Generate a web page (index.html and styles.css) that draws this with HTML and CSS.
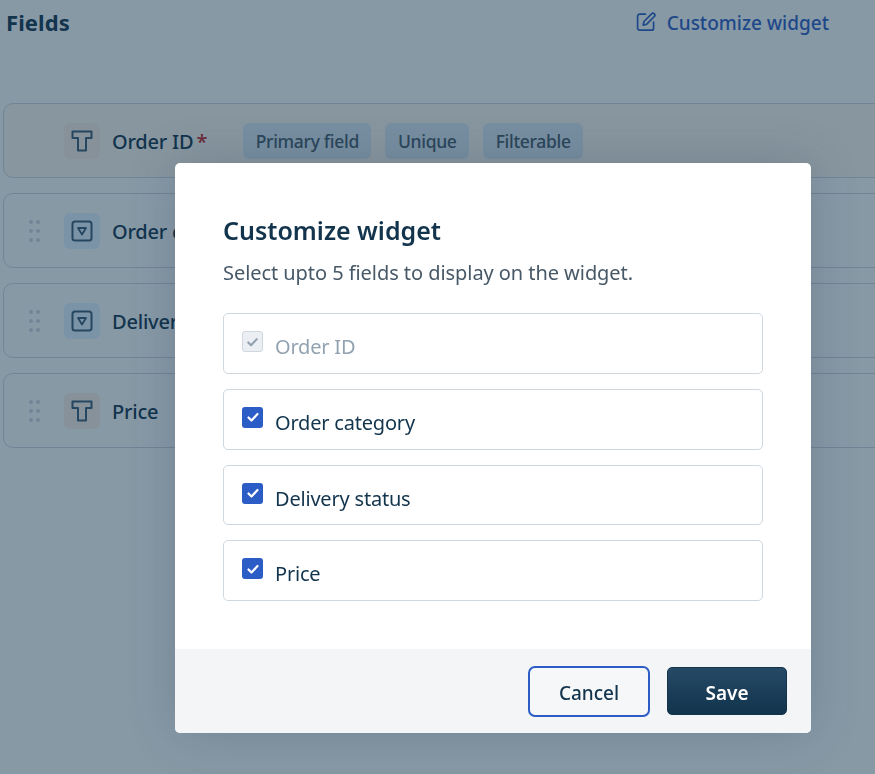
FILE: index.html
```html
<!DOCTYPE html>
<html lang="en">
<head>
<meta charset="utf-8">
<title>Fields</title>
<link rel="stylesheet" href="styles.css">
</head>
<body>
<main class="page">
  <header class="page-head">
    <h1 class="page-title">Fields</h1>
    <a class="customize-link">
      <svg class="edit-icon" viewBox="0 0 20 20" width="20" height="20" fill="none" stroke="currentColor" stroke-width="1.7" stroke-linecap="round" stroke-linejoin="round"><path d="M9.5 2.2H3.6A2 2 0 0 0 1.6 4.2v12a2 2 0 0 0 2 2h12a2 2 0 0 0 2-2v-6"/><path d="M15.6 1.8a1.9 1.9 0 0 1 2.7 2.7l-7.6 7.7-3.6.9.9-3.6z"/></svg>
      <span>Customize widget</span>
    </a>
  </header>
  <section class="field-list">
    <div class="field field-primary">
      <span class="drag drag-empty"></span>
      <span class="type-icon type-text"><svg viewBox="0 0 22 22" width="22" height="22" fill="none" stroke="currentColor" stroke-width="2"><path d="M1.500 1.500h19v6.500h-5.500v12.500h-8V8H1.500z" stroke-linejoin="round"/></svg></span>
      <span class="field-name">Order ID<span class="req">*</span></span>
      <span class="tags"><span class="tag">Primary field</span><span class="tag">Unique</span><span class="tag">Filterable</span></span>
    </div>
    <div class="field">
      <span class="drag"><i></i><i></i><i></i><i></i><i></i><i></i></span>
      <span class="type-icon type-select"><svg viewBox="0 0 22 22" width="22" height="22" fill="none" stroke="currentColor" stroke-width="2"><rect x="1.500" y="1.500" width="19" height="19" rx="2.500"/><path d="M7 8h8l-4 6.500z" stroke-width="1.800" stroke-linejoin="round"/></svg></span>
      <span class="field-name">Order category</span>
    </div>
    <div class="field">
      <span class="drag"><i></i><i></i><i></i><i></i><i></i><i></i></span>
      <span class="type-icon type-select"><svg viewBox="0 0 22 22" width="22" height="22" fill="none" stroke="currentColor" stroke-width="2"><rect x="1.500" y="1.500" width="19" height="19" rx="2.500"/><path d="M7 8h8l-4 6.500z" stroke-width="1.800" stroke-linejoin="round"/></svg></span>
      <span class="field-name">Delivery status</span>
    </div>
    <div class="field">
      <span class="drag"><i></i><i></i><i></i><i></i><i></i><i></i></span>
      <span class="type-icon type-text"><svg viewBox="0 0 22 22" width="22" height="22" fill="none" stroke="currentColor" stroke-width="2"><path d="M1.500 1.500h19v6.500h-5.500v12.500h-8V8H1.500z" stroke-linejoin="round"/></svg></span>
      <span class="field-name">Price</span>
    </div>
  </section>
</main>
<div class="overlay">
  <div class="modal">
    <div class="modal-body">
      <h2 class="modal-title">Customize widget</h2>
      <p class="modal-sub">Select upto 5 fields to display on the widget.</p>
      <div class="options">
        <label class="option option-disabled"><span class="box"><svg viewBox="0 0 20 20" width="20" height="20" fill="none" stroke="currentColor" stroke-width="2.200" stroke-linecap="round" stroke-linejoin="round"><path d="M5.500 10.500l3 3 6-6.500"/></svg></span><span class="option-label">Order ID</span></label>
        <label class="option"><span class="box"><svg viewBox="0 0 20 20" width="20" height="20" fill="none" stroke="currentColor" stroke-width="2.200" stroke-linecap="round" stroke-linejoin="round"><path d="M5.500 10.500l3 3 6-6.500"/></svg></span><span class="option-label">Order category</span></label>
        <label class="option"><span class="box"><svg viewBox="0 0 20 20" width="20" height="20" fill="none" stroke="currentColor" stroke-width="2.200" stroke-linecap="round" stroke-linejoin="round"><path d="M5.500 10.500l3 3 6-6.500"/></svg></span><span class="option-label">Delivery status</span></label>
        <label class="option"><span class="box"><svg viewBox="0 0 20 20" width="20" height="20" fill="none" stroke="currentColor" stroke-width="2.200" stroke-linecap="round" stroke-linejoin="round"><path d="M5.500 10.500l3 3 6-6.500"/></svg></span><span class="option-label">Price</span></label>
      </div>
    </div>
    <footer class="modal-foot">
      <button class="btn btn-cancel">Cancel</button>
      <button class="btn btn-save">Save</button>
    </footer>
  </div>
</div>
</body>
</html>
```

FILE: styles.css
```css
* { box-sizing: border-box; }
html, body { margin: 0; height: 100%; overflow: hidden; }
body {
  background: #fff;
  color: #12344d;
  font-family: "Noto Sans", "Open Sans", sans-serif;
  width: 875px;
  height: 774px;
}
.page { padding: 0 0 0 3px; width: 960px; }
.page-head {
  display: flex;
  align-items: center;
  height: 103px;
  padding: 0 0 57px 3px;
  width: 872px;
}
.page-title { margin: 0 0 3px; font-size: 22px; font-weight: 700; line-height: 46px; letter-spacing: 0.1px; }
.customize-link {
  margin-left: auto;
  margin-right: 46px;
  display: flex;
  align-items: center;
  gap: 11px;
  color: #2c5cc5;
  font-size: 19px;
  font-weight: 500;
}
.edit-icon { margin-top: -3px; }
.field-list { display: flex; flex-direction: column; gap: 15px; }
.field {
  display: flex;
  align-items: center;
  height: 75px;
  border: 1px solid #cfd7df;
  border-radius: 10px;
  padding-left: 25px;
  background: #fff;
}
.field-primary { background: #fff8f0; }
.drag {
  width: 11px;
  height: 22px;
  display: grid;
  grid-template-columns: 4px 4px;
  justify-content: space-between;
  align-content: space-between;
  margin-right: 24px;
}
.drag-empty { visibility: hidden; }
.drag i { width: 4px; height: 4px; border-radius: 50%; background: #cfd7df; display: block; }
.type-icon {
  width: 36px;
  height: 36px;
  border-radius: 6px;
  display: flex;
  align-items: center;
  justify-content: center;
  color: #3b5a75;
  flex: none;
}
.type-text { background: #faefe4; }
.type-select { background: #e2f3ff; }
.field-name { margin-left: 12px; padding-top: 2px; font-size: 20px; font-weight: 500; letter-spacing: -0.2px; white-space: nowrap; }
.req { color: #c82124; margin-left: 3px; }
.tags { display: flex; gap: 14px; margin-left: 36px; }
.tag {
  height: 36px;
  padding: 0 12.500px;
  border-radius: 6px;
  background: #dfe9f5;
  color: #475867;
  font-size: 17.500px;
  font-weight: 500;
  letter-spacing: -0.3px;
  display: flex;
  align-items: center;
}
.overlay {
  position: fixed;
  inset: 0;
  background: rgba(18, 52, 77, 0.5);
}
.modal {
  position: absolute;
  left: 175px;
  top: 163px;
  width: 636px;
  height: 570px;
  background: #fff;
  border-radius: 5px;
  box-shadow: 0 0 50px rgba(18, 52, 77, 0.2);
  display: flex;
  flex-direction: column;
  overflow: hidden;
}
.modal-body { flex: 1; padding: 48px 48px 0; }
.modal-title { margin: 0; font-size: 25px; line-height: 38px; font-weight: 600; }
.modal-sub { margin: 10px 0 0; font-size: 20px; line-height: 28px; color: #475867; letter-spacing: -0.06px; }
.options { display: flex; flex-direction: column; gap: 15px; margin-top: 26.300px; }
.option {
  height: 60.670px;
  border: 1px solid #cfd7df;
  border-radius: 5px;
  padding: 17px 18px;
  display: flex;
  align-items: flex-start;
  font-size: 20px;
  letter-spacing: -0.2px;
}
.box {
  width: 21px;
  height: 21px;
  border-radius: 3px;
  background: #2c5cc5;
  color: #fff;
  display: flex;
  align-items: center;
  justify-content: center;
}
.option-label { margin-left: 12px; margin-top: 2px; line-height: 28px; }
.option-disabled .box { background: #ebeff3; border: 1px solid #cfd7df; color: #92a2b1; }
.option-disabled .option-label { color: #92a2b1; }
.modal-foot {
  height: 84px;
  background: #f3f5f7;
  display: flex;
  align-items: center;
  justify-content: flex-end;
  gap: 17px;
  padding-right: 24px;
}
.btn {
  font-family: inherit;
  font-size: 19px;
  border-radius: 5px;
  height: 48px;
  padding-top: 5px;
}
.btn-cancel {
  width: 122px;
  height: 51px;
  background: #f5f7f9;
  color: #12344d;
  border: 2.500px solid #2c5cc5;
  border-radius: 7px;
  font-weight: 500;
}
.btn-save {
  width: 120px;
  color: #fff;
  font-weight: 600;
  border: 1px solid #12344d;
  background: linear-gradient(to bottom, #264966, #12344d);
}
```
